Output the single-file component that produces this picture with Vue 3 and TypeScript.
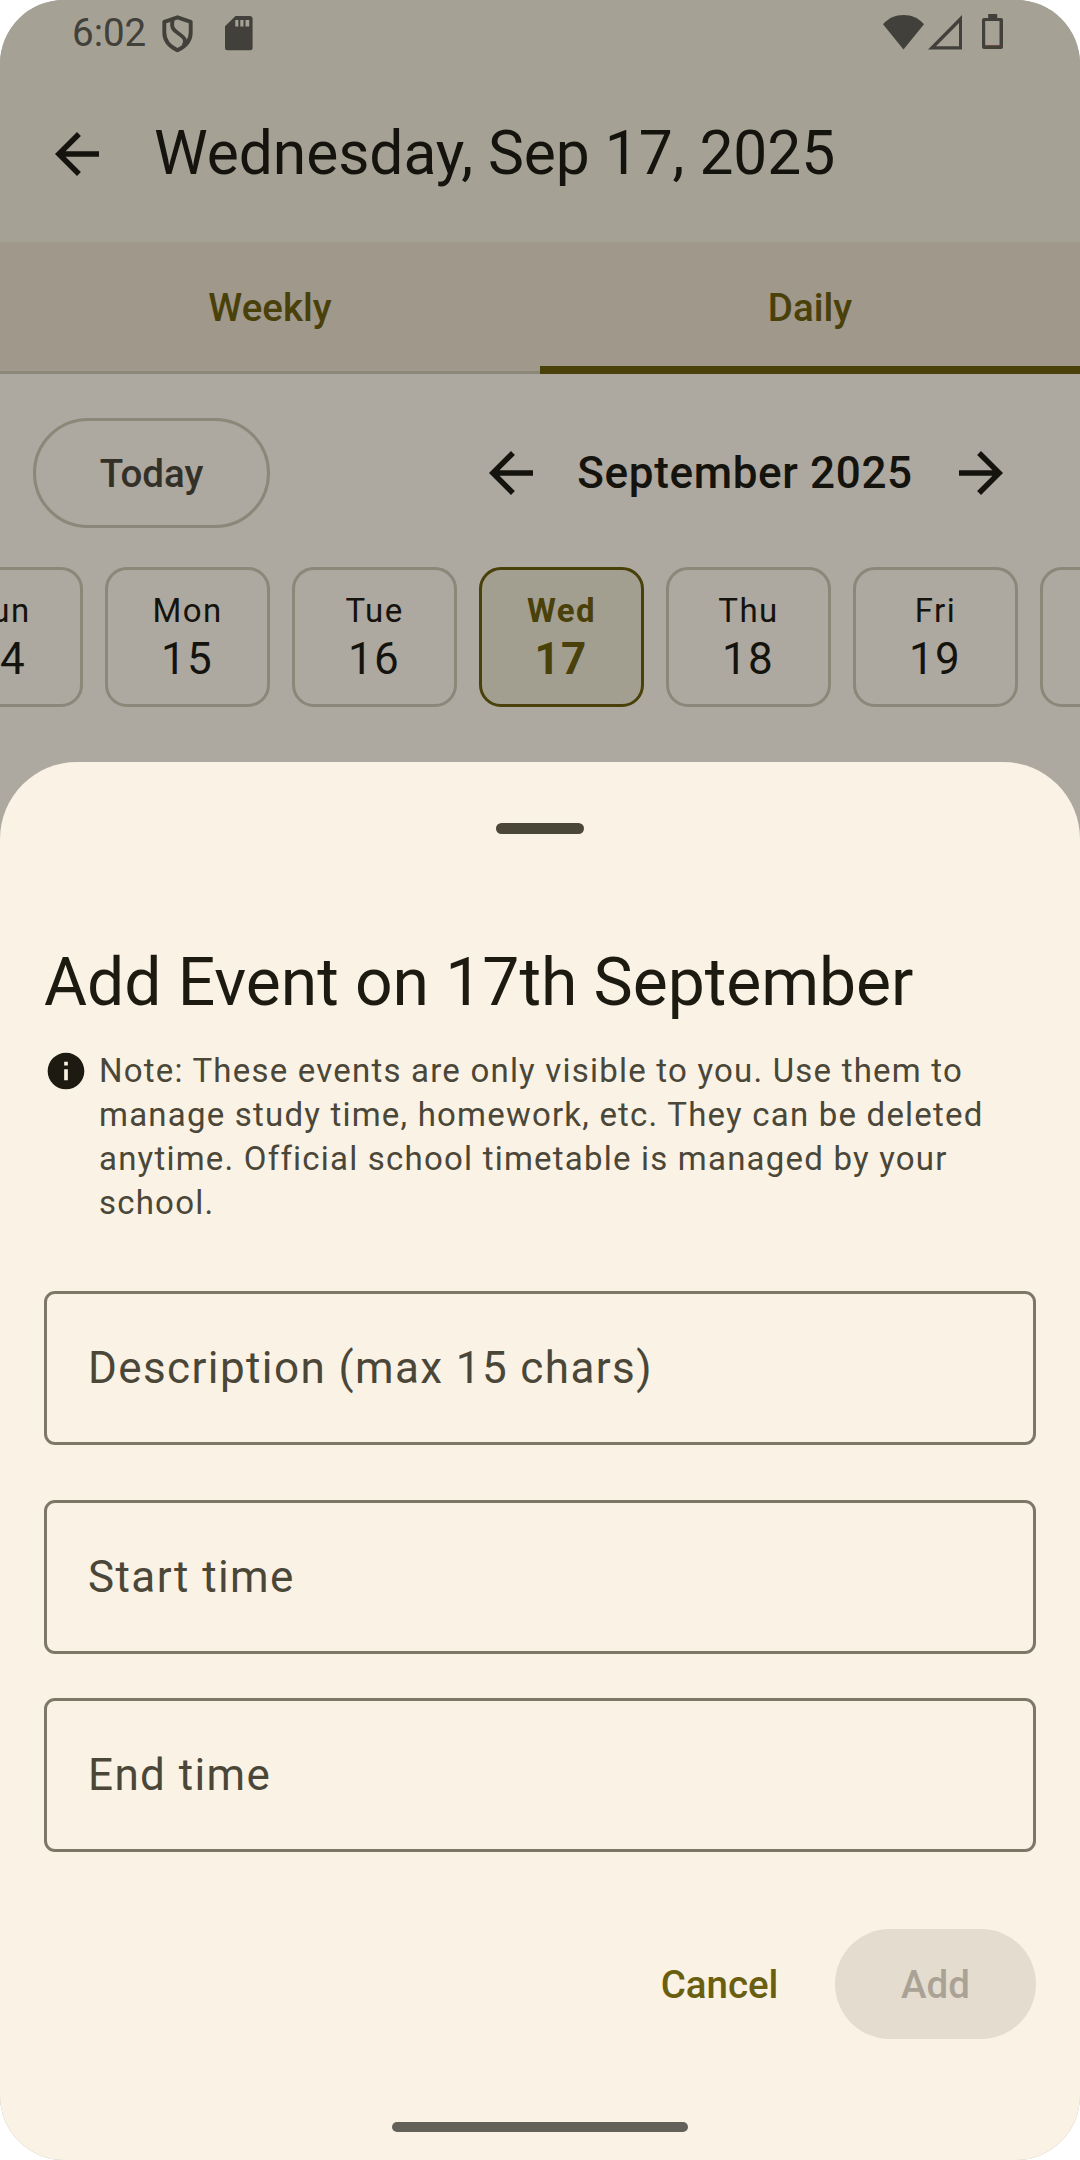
<script setup lang="ts">
import { ref } from 'vue'

interface Day {
  name: string
  date: number
}

const days: Day[] = [
  { name: 'Sun', date: 14 },
  { name: 'Mon', date: 15 },
  { name: 'Tue', date: 16 },
  { name: 'Wed', date: 17 },
  { name: 'Thu', date: 18 },
  { name: 'Fri', date: 19 },
  { name: 'Sat', date: 20 },
]
const selected = ref<number>(17)
const tabs: string[] = ['Weekly', 'Daily']
const activeTab = ref<string>('Daily')
</script>

<template>
  <div class="screen">
    <div class="statusbar">
      <span class="clock">6:02</span>
      <svg class="shield" width="32" height="38" viewBox="0 0 32 38" fill="none" stroke="currentColor" stroke-width="3.9">
        <path d="M15.500 2.300 L28.700 6.800 V17.500 C28.700 25 23.500 31.500 15.500 35.300 C7.500 31.500 2.300 25 2.300 17.500 V6.800 Z" stroke-linejoin="round" />
        <path d="M10.800 4.500 C8.500 13 12 15.500 16.500 18.500 C22.500 22.500 25 25.500 21.500 31" />
      </svg>
      <svg class="sd" width="28" height="35" viewBox="0 0 28 35">
        <path fill="currentColor" fill-rule="evenodd" d="M10.500 0 H24.600 Q27.600 0 27.600 3 V31.800 Q27.600 34.300 25.100 34.300 H2.500 Q0 34.300 0 31.800 V10.300 Z M10.300 4 V10.500 H13.300 V4 Z M15.300 4 V10.500 H18.500 V4 Z M20.500 4 V10.500 H24.200 V4 Z" />
      </svg>
      <span class="spacer"></span>
      <svg class="wifi" width="41" height="35" viewBox="0 0 41 35">
        <path fill="currentColor" d="M20.500 34.500 L0 9.300 C5.500 3 12.500 0 20.500 0 C28.500 0 35.500 3 41 9.300 Z" />
      </svg>
      <svg class="signal" width="34" height="35" viewBox="0 0 34 35">
        <path fill="currentColor" fill-rule="evenodd" d="M34 0 V34.500 H0 Z M31 8 L8 31.300 H31 Z" />
      </svg>
      <svg class="battery" width="21" height="35" viewBox="0 0 21 35">
        <path fill="currentColor" fill-rule="evenodd" d="M6.200 0 H15.200 V4 H19 Q21 4 21 6 V33 Q21 35 19 35 H2 Q0 35 0 33 V6 Q0 4 2 4 H6.200 Z M3.200 7 V31 H17.500 V7 Z" />
        <rect x="3.200" y="31" width="14.300" height="1" fill="#6e4a3e" />
      </svg>
    </div>

    <header class="appbar">
      <svg class="icon" viewBox="0 0 24 24"><path d="M20 11H7.830l5.590-5.590L12 4l-8 8 8 8 1.410-1.410L7.830 13H20v-2z" /></svg>
      <h1>Wednesday, Sep 17, 2025</h1>
    </header>

    <nav class="tabs">
      <div v-for="tab in tabs" :key="tab" class="tab" :class="{ active: tab === activeTab }">{{ tab }}</div>
    </nav>

    <section class="toolbar">
      <button class="today">Today</button>
      <div class="month">
        <svg class="icon" viewBox="0 0 24 24"><path d="M20 11H7.830l5.590-5.590L12 4l-8 8 8 8 1.410-1.410L7.830 13H20v-2z" /></svg>
        <span class="month-name">September 2025</span>
        <svg class="icon" viewBox="0 0 24 24"><path d="M12 4l-1.410 1.410L16.170 11H4v2h12.170l-5.580 5.590L12 20l8-8z" /></svg>
      </div>
    </section>

    <section class="days">
      <div v-for="day in days" :key="day.date" class="day" :class="{ selected: day.date === selected }">
        <span class="day-name">{{ day.name }}</span>
        <span class="day-date">{{ day.date }}</span>
      </div>
    </section>

    <main class="sheet">
      <div class="handle"></div>
      <h2>Add Event on 17th September</h2>
      <div class="note">
        <svg class="info" viewBox="0 0 24 24"><path d="M12 2C6.480 2 2 6.480 2 12s4.480 10 10 10 10-4.480 10-10S17.520 2 12 2zm1 15h-2v-6h2v6zm0-8h-2V7h2v2z" /></svg>
        <p>Note: These events are only visible to you. Use them to manage study time, homework, etc. They can be deleted anytime. Official school timetable is managed by your school.</p>
      </div>
      <div class="field description">Description (max 15 chars)</div>
      <div class="field start">Start time</div>
      <div class="field">End time</div>
      <div class="actions">
        <button class="cancel">Cancel</button>
        <button class="add" disabled>Add</button>
      </div>
      <div class="gesture"></div>
    </main>
  </div>
</template>

<style>
body {
  margin: 0;
  background: #ffffff;
}
</style>

<style scoped>
.screen {
  position: relative;
  box-sizing: border-box;
  width: 1080px;
  height: 2160px;
  overflow: hidden;
  border-radius: 64px;
  background: #ada8a0;
  color: #14130d;
  font-family: Roboto, sans-serif;
}
h1, h2, p {
  margin: 0;
  font-weight: 400;
}
button {
  box-sizing: border-box;
  padding: 0;
  border: 0;
  background: none;
  font: 500 38.5px/55px Roboto, sans-serif;
  letter-spacing: -0.05px;
}
.statusbar {
  display: flex;
  align-items: flex-start;
  box-sizing: border-box;
  height: 66px;
  padding: 0 77px 0 72px;
  background: #a5a194;
  color: #41403a;
}
.clock {
  width: 90px;
  font-size: 38.5px;
  line-height: 66px;
}
.shield { margin-top: 15px; }
.sd { margin: 16px 0 0 31px; }
.spacer { flex: 1; }
.wifi { margin-top: 15px; }
.signal { margin: 15px 0 0 4px; }
.battery { margin: 14px 0 0 20px; }
.appbar {
  display: flex;
  align-items: center;
  height: 176px;
  padding-left: 44px;
  background: #a5a194;
}
.icon {
  flex: none;
  width: 66px;
  height: 66px;
  fill: currentColor;
}
h1 {
  margin: 0 0 2px 44px;
  font-size: 60.5px;
  line-height: 77px;
  letter-spacing: -0.06px;
}
.tabs {
  display: flex;
  height: 132px;
  background: #9f988b;
}
.tab {
  box-sizing: border-box;
  flex: 1;
  height: 132px;
  border-bottom: 3px solid #8b8779;
  color: #4a400a;
  font-size: 38.5px;
  font-weight: 500;
  line-height: 132px;
  text-align: center;
}
.tab.active { border-bottom: 8px solid #4a400a; }
.toolbar {
  display: flex;
  align-items: center;
  justify-content: space-between;
  padding: 44px 66px 0 33px;
}
.today {
  width: 237px;
  height: 110px;
  border: 3px solid #8b8779;
  border-radius: 55px;
  color: #333028;
}
.month {
  display: flex;
  align-items: center;
}
.month-name {
  box-sizing: border-box;
  width: 404px;
  padding-right: 2px;
  font-size: 44px;
  font-weight: 500;
  line-height: 66px;
  letter-spacing: 0.65px;
  text-align: center;
}
.days {
  display: flex;
  gap: 22px;
  margin: 39px 0 0 -82px;
}
.day {
  display: flex;
  flex: none;
  flex-direction: column;
  align-items: center;
  box-sizing: border-box;
  width: 165px;
  height: 140px;
  padding-top: 19px;
  border: 3px solid #8b8779;
  border-radius: 22px;
}
.day.selected {
  border-color: #4a400a;
  background: #a29f91;
  color: #4a400a;
  font-weight: 700;
}
.day-name {
  font-size: 33px;
  line-height: 44px;
  letter-spacing: 1.45px;
}
.day-date {
  margin-right: 1px;
  font-size: 44px;
  line-height: 52px;
  letter-spacing: 1.375px;
}
.sheet {
  position: absolute;
  top: 762px;
  right: 0;
  bottom: 0;
  left: 0;
  box-sizing: border-box;
  padding: 61px 44px 0;
  border-radius: 77px 77px 0 0;
  background: #faf2e5;
  color: #1d1b11;
}
.handle {
  width: 88px;
  height: 11px;
  margin: 0 auto;
  border-radius: 6px;
  background: #4b4738;
}
h2 {
  margin-top: 105px;
  font-size: 66px;
  line-height: 88px;
  letter-spacing: -0.05px;
}
.note {
  display: flex;
  align-items: flex-start;
  gap: 11px;
  margin-top: 22px;
  color: #4b4738;
}
.info {
  flex: none;
  width: 44px;
  height: 44px;
  fill: #1d1b11;
}
.note p {
  font-size: 33px;
  line-height: 44px;
  letter-spacing: 1.21px;
}
.field {
  box-sizing: border-box;
  height: 154px;
  padding-left: 41px;
  border: 3px solid #7d7767;
  border-radius: 11px;
  color: #4b4738;
  font-size: 44px;
  line-height: 148px;
  letter-spacing: 1.4px;
}
.description { margin: 66px 0 55px; }
.start { margin-bottom: 44px; }
.actions {
  display: flex;
  justify-content: flex-end;
  margin-top: 77px;
}
.cancel {
  width: 231px;
  height: 110px;
  color: #6a5f10;
}
.add {
  width: 201px;
  height: 110px;
  border-radius: 55px;
  background: #e4dccf;
  color: #aaa395;
}
.gesture {
  width: 296px;
  height: 10px;
  margin: 83px auto 0;
  border-radius: 5px;
  background: #64615b;
}
</style>
